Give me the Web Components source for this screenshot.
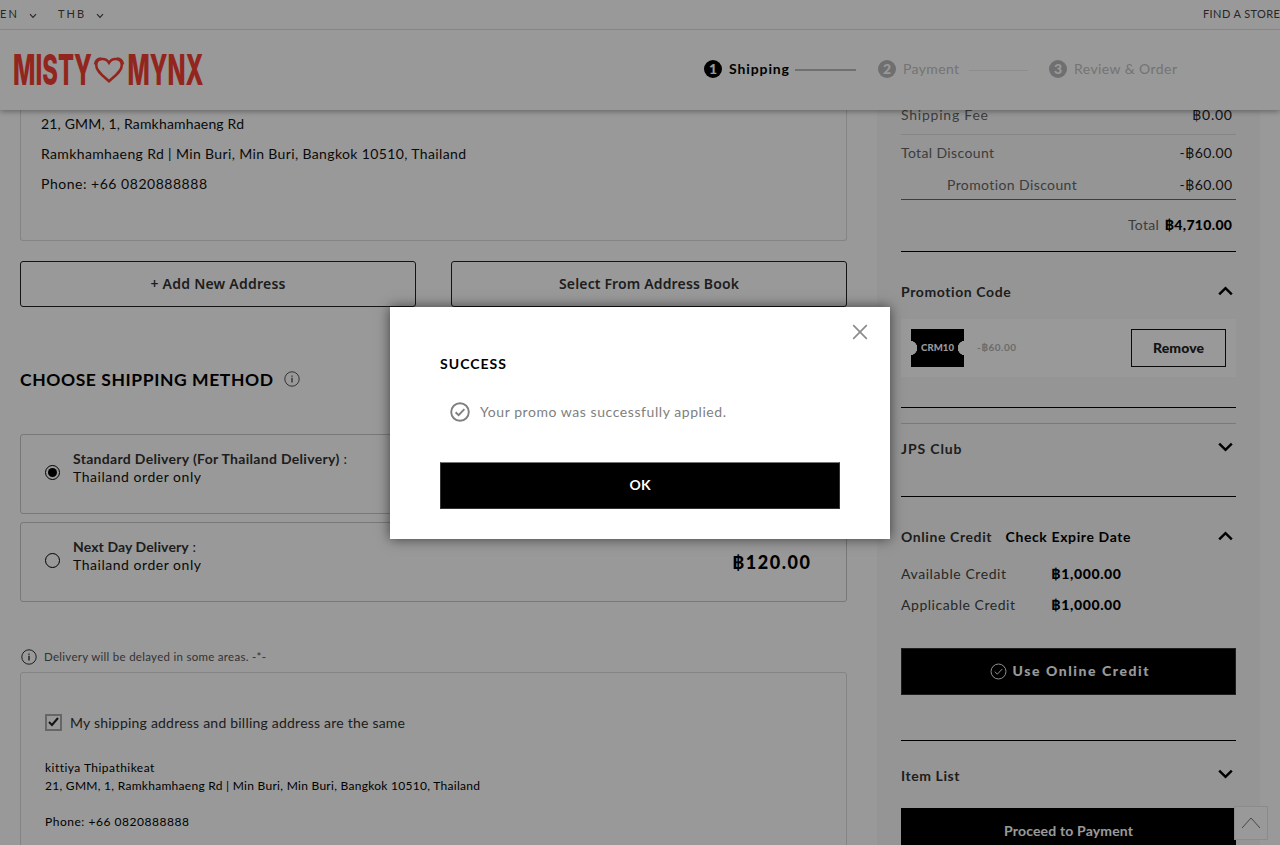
<!DOCTYPE html>
<html lang="en">
<head>
<meta charset="utf-8">
<title>Checkout - Shipping</title>
<style>
html,body{margin:0;height:100%;overflow:hidden;background:#fff}
body{font-family:Lato,"Noto Sans",sans-serif;font-size:14px;color:#111}
</style>
</head>
<body>
<checkout-page></checkout-page>
<script>
const define=(name,html,init)=>customElements.define(name,class extends HTMLElement{
  connectedCallback(){
    if(this.shadowRoot)return;
    const t=document.createElement('template');
    t.innerHTML=html;
    this.attachShadow({mode:'open'}).appendChild(t.content.cloneNode(true));
    if(init)init(this,this.shadowRoot);
  }
});

/* one line of text, tracked out to the width given in "w" */
define('fit-text',`<style>:host{display:inline-block;white-space:nowrap;flex:none}span{display:inline-block;white-space:nowrap;transform:translateY(var(--dy,-1px))}</style><span><slot></slot></span>`,(el,root)=>{
  const s=root.querySelector('span');
  if(el.hasAttribute('size'))el.style.fontSize=el.getAttribute('size')+'px';
  if(el.hasAttribute('weight'))el.style.fontWeight=el.getAttribute('weight');
  if(el.hasAttribute('color'))el.style.color=el.getAttribute('color');
  const w=+el.getAttribute('w'),n=el.textContent.length;
  if(w&&n>1){
    const ls=(w-s.getBoundingClientRect().width)/(n-1);
    s.style.letterSpacing=ls+'px';
    s.style.marginRight=-ls+'px';
  }
});

define('chevron-icon',`<style>:host{display:block;flex:none;width:15px;height:10px}:host([down]){transform:rotate(180deg)}svg{display:block}</style>
<svg width="15" height="10" viewBox="0 0 15 10" fill="none" stroke="#000" stroke-width="2.5"><path d="M1.2 8.3 7.5 2.2l6.3 6.1"/></svg>`);

define('caret-icon',`<style>:host{display:block;flex:none}svg{display:block}</style>
<svg width="8" height="6" viewBox="0 0 8 6" fill="none" stroke="#444" stroke-width="1.2"><path d="M1 1.2 4 4.3l3-3.1"/></svg>`);

define('info-icon',`<style>:host{display:block;flex:none;color:#555}svg{display:block}</style>
<svg width="16" height="16" viewBox="0 0 16 16" fill="none" stroke="currentColor"><circle cx="8" cy="8" r="7.2"/><path d="M8 6.8v4.6M8 4.4v1.4" stroke-width="1.4"/></svg>`);

define('check-circle',`<style>:host{display:block;flex:none}svg{display:block;width:100%;height:100%}</style>
<svg viewBox="0 0 20 20" fill="none" stroke="currentColor"><circle cx="10" cy="10" r="8.8"/><path d="m5.6 10.2 3 2.9 5.8-6"/></svg>`,(el,root)=>{
  const s=el.getAttribute('size');el.style.width=el.style.height=s+'px';
  root.querySelector('svg').style.strokeWidth=el.getAttribute('stroke');
});

define('top-bar',`<style>:host{display:flex;align-items:center;height:29px;border-bottom:1px solid #dedede;background:#fff;position:relative;z-index:3;color:#444}
caret-icon{margin:3px 21px 0 12px}.r{margin-left:auto;margin-right:0}</style>
<fit-text size="11" w="17">EN</fit-text><caret-icon></caret-icon>
<fit-text size="11" w="26">THB</fit-text><caret-icon></caret-icon>
<fit-text class="r" size="11" w="77">FIND A STORE</fit-text>`);

/* the wordmark is squeezed to a condensed cut: data-w is each word's width */
define('brand-logo',`<style>:host{display:block}svg{display:block;overflow:visible}text{font-family:Inter,"Liberation Sans",sans-serif;font-weight:800;font-size:42px;fill:#f63f34}</style>
<svg width="192" height="34" viewBox="0 0 192 34">
<g transform="translate(1 32)"><text data-w="79">MISTY</text></g>
<path d="M97 28.200C92 23.500 84.200 18.500 84.200 12.200c0-7 9-8.500 12.800-2.400 3.800-6.100 12.800-4.600 12.800 2.400 0 6.300-7.800 11.300-12.800 16Z" fill="none" stroke="#f63f34" stroke-width="2.600"/>
<path d="M83.200 11.500c.4-3.200 2.500-5.500 6-5.700M110.800 11.500c-.4-3.200-2.500-5.500-6-5.700" fill="none" stroke="#f63f34" stroke-width="3"/>
<g transform="translate(115.500 32)"><text data-w="76">MYNX</text></g></svg>`,(el,root)=>{
  for(const t of root.querySelectorAll('text'))t.setAttribute('transform',`scale(${t.dataset.w/t.getComputedTextLength()} 1)`);
});

define('step-item',`<style>:host{display:flex;align-items:center;color:#c2c2c2;--dot:#b9b9b9}
:host([active]){color:#000;--dot:#000}
i{width:18px;height:18px;border-radius:50%;background:var(--dot);color:#fff;font:900 14px/18px Lato,sans-serif;text-align:center;margin-right:7px}</style><i></i><slot></slot>`,(el,root)=>{root.querySelector('i').textContent=el.getAttribute('n')});

define('site-header',`<style>:host{display:flex;align-items:center;height:80px;box-sizing:border-box;background:#fff;box-shadow:0 1px 6px rgba(0,0,0,.4);position:relative;z-index:2;padding-left:12px}
nav{display:flex;align-items:center;margin-left:500px;margin-top:-2px}
hr{border:0;height:2px;background:#bbb;margin:2px 22px 0 6px;width:61px}
hr.b{background:#ececec;height:1px;width:59px;margin:2px 21px 0 10px}</style>
<brand-logo></brand-logo>
<nav><step-item n="1" active><fit-text size="14" weight="700" w="60">Shipping</fit-text></step-item><hr>
<step-item n="2"><fit-text size="14" w="56">Payment</fit-text></step-item><hr class="b">
<step-item n="3"><fit-text size="14" w="103">Review &amp; Order</fit-text></step-item></nav>`);

define('address-card',`<style>:host{display:block;height:131px;box-sizing:border-box;border:1px solid #dcdcdc;border-top:0;border-radius:0 0 3px 3px;padding-left:20px}
div{line-height:30px;height:30px}div:first-child{margin-top:-1px}</style>
<div><fit-text w="203">21, GMM, 1, Ramkhamhaeng Rd</fit-text></div>
<div><fit-text w="425">Ramkhamhaeng Rd | Min Buri, Min Buri, Bangkok 10510, Thailand</fit-text></div>
<div><fit-text w="166">Phone: +66 0820888888</fit-text></div>`);

define('outline-button',`<style>:host{display:flex;flex:1;align-items:center;justify-content:center;height:46px;box-sizing:border-box;border:1px solid #222;border-radius:3px;color:#333;font-family:"Noto Sans","Open Sans",sans-serif}</style><slot></slot>`);

define('delivery-option',`<style>:host{display:flex;align-items:center;height:80px;box-sizing:border-box;border:1px solid #c8c8c8;border-radius:3px;padding:0 36px 0 24px;line-height:18px;margin-bottom:8px}
i{width:13px;height:13px;border:1px solid #000;border-radius:50%;margin:-3px 13px 0 0;flex:none;display:grid;place-items:center}
:host([checked]) i:after{content:"";width:9px;height:9px;border-radius:50%;background:#000}
.t{display:flex;flex-direction:column;align-items:flex-start;margin-top:-11px}
.p{margin-left:auto;--dy:0px}</style><i></i><div class="t"><slot></slot></div><div class="p"><slot name="price"></slot></div>`);

define('billing-card',`<style>:host{display:block;height:200px;border:1px solid #dcdcdc;border-radius:3px;padding:39px 24px 0}
.c{display:flex;align-items:center;gap:8px;color:#333}
.b{width:13px;height:13px;border:2px solid #aaa;display:grid;place-items:center}
.a{margin-top:28px;line-height:18px;font-size:12px;display:flex;flex-direction:column;align-items:flex-start;color:#000}.a :last-child{margin-top:18px}.c fit-text{margin-top:3px}</style>
<div class="c"><span class="b"><svg width="11" height="10" viewBox="0 0 11 10" fill="none" stroke="#222" stroke-width="2"><path d="m1 5 3 3 6-7"/></svg></span><fit-text w="335">My shipping address and billing address are the same</fit-text></div>
<div class="a"><fit-text w="109">kittiya Thipathikeat</fit-text><fit-text w="435">21, GMM, 1, Ramkhamhaeng Rd | Min Buri, Min Buri, Bangkok 10510, Thailand</fit-text><fit-text w="144">Phone: +66 0820888888</fit-text></div>`);

define('shipping-form',`<style>:host{display:block;width:827px}
.btns{display:flex;gap:35px;margin-top:20px}
h2{display:flex;align-items:center;gap:11px;margin:58px 0 0;height:30px;font-size:17.5px;color:#000}
h2 info-icon{margin-top:-2px}
.opts{margin-top:39px}
.note{display:flex;align-items:center;gap:7.5px;height:16px;margin:47px 0 7px .5px;color:#555}
.note info-icon{color:#333}.price{--dy:1px}</style>
<address-card></address-card>
<div class="btns"><outline-button><fit-text size="14" weight="600" w="135">+ Add New Address</fit-text></outline-button><outline-button><fit-text size="14" weight="600" w="180">Select From Address Book</fit-text></outline-button></div>
<h2><fit-text w="253" weight="700">CHOOSE SHIPPING METHOD</fit-text><info-icon></info-icon></h2>
<div class="opts">
<delivery-option checked><fit-text w="274" color="#333"><b>Standard Delivery (For Thailand Delivery)</b> :</fit-text><fit-text w="128">Thailand order only</fit-text></delivery-option>
<delivery-option><fit-text w="123" color="#333"><b>Next Day Delivery</b> :</fit-text><fit-text w="128">Thailand order only</fit-text><fit-text class="price" slot="price" size="18" weight="900" w="78" color="#000">฿120.00</fit-text></delivery-option>
</div>
<div class="note"><info-icon></info-icon><fit-text size="11.5" w="222">Delivery will be delayed in some areas. -*-</fit-text></div>
<billing-card></billing-card>`);

define('sum-row',`<style>:host{display:flex;align-items:center;justify-content:space-between;height:var(--h);padding-right:4px;color:#666}</style><slot></slot>`,el=>el.style.setProperty('--h',el.getAttribute('h')+'px'));

define('fold-head',`<style>:host{display:flex;align-items:center;height:28px;padding:var(--top) 3px 0 0;color:#333}chevron-icon{margin:-3px 0 0 auto}chevron-icon[down]{margin-top:-4px}</style><slot></slot>`,(el,root)=>{
  el.style.setProperty('--top',el.getAttribute('top')+'px');
  const c=document.createElement('chevron-icon');
  if(el.hasAttribute('closed'))c.setAttribute('down','');
  root.appendChild(c);
});

define('promo-ticket',`<style>:host{display:flex;align-items:center;height:58px;background:#fff;padding:0 10px;box-sizing:border-box}
.k{width:53px;height:38px;display:grid;place-items:center;color:#fff;background:radial-gradient(circle at -1px 50%,#fff 7px,transparent 7.500px),radial-gradient(circle at 54px 50%,#fff 7px,transparent 7.500px),#000}
.v{margin-left:13px}
.r{margin-left:auto;width:95px;height:38px;box-sizing:border-box;border:1px solid #111;display:grid;place-items:center;color:#222;--dy:-1.500px}</style>
<div class="k"><fit-text size="9.500" weight="900" w="33">CRM10</fit-text></div><fit-text class="v" size="10" weight="700" w="39" color="#b3b3b3">-฿60.00</fit-text>
<div class="r"><fit-text weight="900" w="51">Remove</fit-text></div>`);

define('order-summary',`<style>:host{display:block;width:335px;height:735px;padding:0 24px;background:#f9f9f9;color:#222}
.line{height:1px;background:#000}.lt{background:#dedede}.md{background:#666}.g{background:#ccc}
.first{margin-top:-14px}.in{padding-left:46px}
.cr{display:flex;align-items:center;height:31px;color:#444;--dy:0px}.cr :first-child{width:150px}
.btn{display:flex;align-items:center;justify-content:center;height:47px;box-sizing:border-box;background:#000;color:#fff;border:1px solid #333;gap:5px;--dy:-1.500px}
.pay{height:46px;border-color:#000}.use{margin:28px 0 45px;padding-left:2px}.use check-circle{margin-top:-1px}
.val{color:#222}.total{margin-right:2px}</style>
<sum-row class="first" h="38"><fit-text w="87">Shipping Fee</fit-text><fit-text class="val" w="40">฿0.00</fit-text></sum-row>
<div class="line lt"></div>
<sum-row h="36"><fit-text w="93">Total Discount</fit-text><fit-text class="val" w="52.5">-฿60.00</fit-text></sum-row>
<sum-row h="28"><fit-text class="in" w="130">Promotion Discount</fit-text><fit-text class="val" w="52.5">-฿60.00</fit-text></sum-row>
<div class="line md"></div>
<sum-row h="51"><span></span><span><fit-text class="total" w="31">Total</fit-text>&nbsp;<fit-text w="67.5" weight="900" color="#000">฿4,710.00</fit-text></span></sum-row>
<div class="line"></div>
<fold-head top="26" style="margin-bottom:13px"><fit-text weight="700" w="110">Promotion Code</fit-text></fold-head>
<promo-ticket></promo-ticket>
<div class="line" style="margin-top:30px"></div>
<div class="line g" style="margin-top:15px"></div>
<fold-head top="11" closed style="margin-bottom:33px"><fit-text weight="700" w="60.5">JPS Club</fit-text></fold-head>
<div class="line"></div>
<fold-head top="26" style="margin-bottom:7px"><fit-text weight="700" w="90.5">Online Credit</fit-text><fit-text weight="700" w="125" color="#000" style="margin-left:14px">Check Expire Date</fit-text></fold-head>
<div class="cr"><fit-text w="105">Available Credit</fit-text><fit-text weight="900" w="70" color="#000">฿1,000.00</fit-text></div>
<div class="cr"><fit-text w="114">Applicable Credit</fit-text><fit-text weight="900" w="70" color="#000">฿1,000.00</fit-text></div>
<div class="btn use"><check-circle size="17" stroke="1.1"></check-circle><fit-text weight="900" w="136">Use Online Credit</fit-text></div>
<div class="line"></div>
<fold-head top="21" closed style="margin-bottom:18px"><fit-text weight="700" w="58.5">Item List</fit-text></fold-head>
<div class="btn pay"><fit-text weight="700" w="129">Proceed to Payment</fit-text></div>`);

define('scroll-top',`<style>:host{position:absolute;left:1234px;top:806px;width:34px;height:34px;box-sizing:border-box;background:#fff;border:1px solid #e8e8e8;display:grid;place-items:center;z-index:4}</style>
<svg width="20" height="12" viewBox="0 0 20 12" fill="none" stroke="#777"><path d="M1 11 10 1l9 10"/></svg>`);

define('success-dialog',`<style>:host{position:absolute;left:390px;top:307px;width:500px;height:232px;box-sizing:border-box;background:#fff;box-shadow:0 0 12px rgba(0,0,0,.6);padding:47px 50px 0;z-index:10}
.x{position:absolute;right:22px;top:17px}
h3{margin:0;font-size:14px;line-height:20px;color:#000;--dy:0px}
.m{display:flex;align-items:center;gap:10px;padding-left:10px;margin-top:28px;height:20px;color:#808080}
.ok{display:flex;align-items:center;justify-content:center;height:47px;box-sizing:border-box;border:1px solid #333;border-top-color:#777;background:#000;color:#fff;margin-top:40px}</style>
<svg class="x" width="16" height="16" viewBox="0 0 16 16" stroke="#8c8c8c" stroke-width="1.700"><path d="m1.200 1.200 13.600 13.600M14.800 1.200 1.200 14.800"/></svg>
<h3><fit-text w="66" weight="700">SUCCESS</fit-text></h3>
<div class="m"><check-circle size="20" stroke="1.9"></check-circle><fit-text w="246">Your promo was successfully applied.</fit-text></div>
<div class="ok"><fit-text weight="700" w="21">OK</fit-text></div>`);

define('checkout-page',`<style>:host{display:block;position:relative;width:1280px;height:845px;overflow:hidden;background:#fff}
main{display:flex;gap:30px;padding-left:20px;height:735px;overflow:hidden}
.mask{position:absolute;inset:0;background:rgba(0,0,0,.4);z-index:9}</style>
<top-bar></top-bar><site-header></site-header>
<main><shipping-form></shipping-form><order-summary></order-summary></main>
<scroll-top></scroll-top><div class="mask"></div><success-dialog></success-dialog>`);
</script>
</body>
</html>
